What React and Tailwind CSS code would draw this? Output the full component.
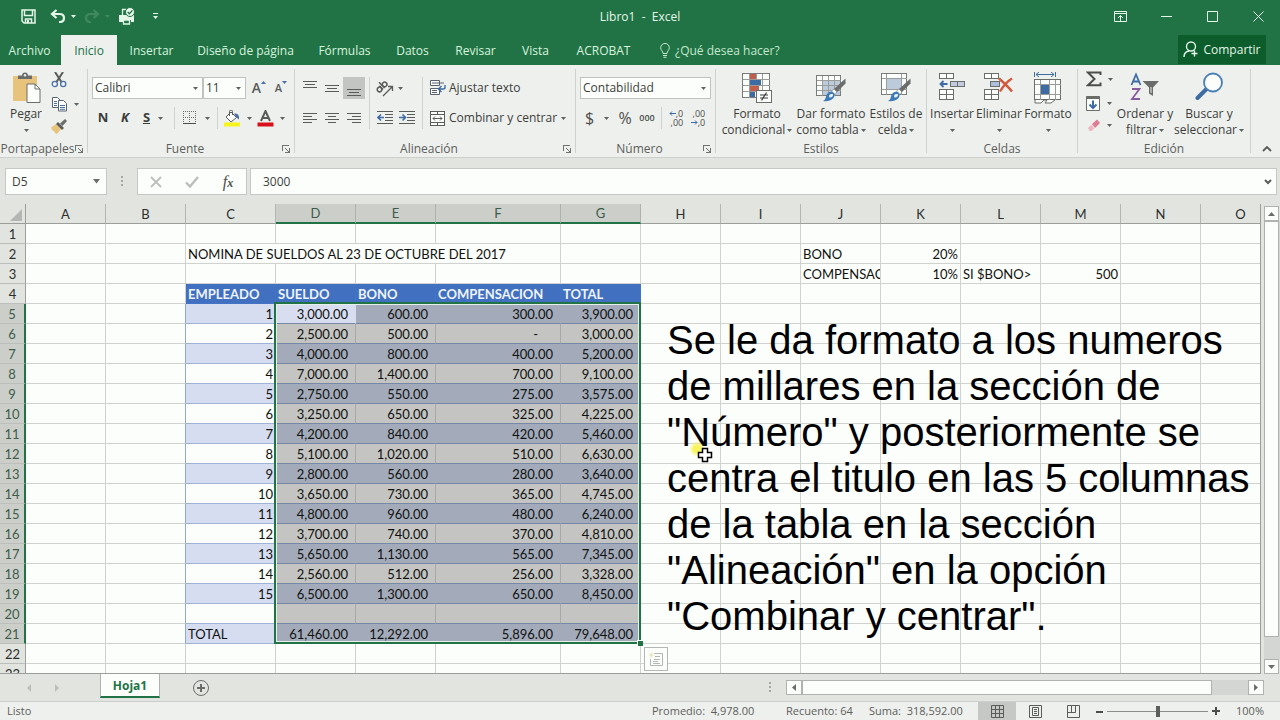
import React from 'react';
import clsx from 'clsx';

const columns = [
  { name: 'A', width: 80 },
  { name: 'B', width: 80 },
  { name: 'C', width: 90 },
  { name: 'D', width: 80 },
  { name: 'E', width: 80 },
  { name: 'F', width: 125 },
  { name: 'G', width: 80 },
  ...'HIJKLMNO'.split('').map((name) => ({ name, width: 80 })),
];

const ROW_HEADER_WIDTH = 26;
const ROW_COUNT = 23;
const sheetWidth = columns.reduce((sum, c) => sum + c.width, ROW_HEADER_WIDTH);

const payroll = [
  ['3,000.00', '600.00', '300.00', '3,900.00'],
  ['2,500.00', '500.00', '-', '3,000.00'],
  ['4,000.00', '800.00', '400.00', '5,200.00'],
  ['7,000.00', '1,400.00', '700.00', '9,100.00'],
  ['2,750.00', '550.00', '275.00', '3,575.00'],
  ['3,250.00', '650.00', '325.00', '4,225.00'],
  ['4,200.00', '840.00', '420.00', '5,460.00'],
  ['5,100.00', '1,020.00', '510.00', '6,630.00'],
  ['2,800.00', '560.00', '280.00', '3,640.00'],
  ['3,650.00', '730.00', '365.00', '4,745.00'],
  ['4,800.00', '960.00', '480.00', '6,240.00'],
  ['3,700.00', '740.00', '370.00', '4,810.00'],
  ['5,650.00', '1,130.00', '565.00', '7,345.00'],
  ['2,560.00', '512.00', '256.00', '3,328.00'],
  ['6,500.00', '1,300.00', '650.00', '8,450.00'],
];

const cells = {
  C2: 'NOMINA DE SUELDOS AL 23 DE OCTUBRE DEL 2017',
  J2: 'BONO',
  K2: '20%',
  J3: 'COMPENSACION',
  K3: '10%',
  L3: 'SI $BONO>',
  M3: '500',
  C4: 'EMPLEADO',
  D4: 'SUELDO',
  E4: 'BONO',
  F4: 'COMPENSACION',
  G4: 'TOTAL',
  C21: 'TOTAL',
  D21: '61,460.00',
  E21: '12,292.00',
  F21: '5,896.00',
  G21: '79,648.00',
};

payroll.forEach((values, i) => {
  cells[`C${i + 5}`] = String(i + 1);
  ['D', 'E', 'F', 'G'].forEach((col, j) => {
    cells[`${col}${i + 5}`] = values[j];
  });
});

const note = [
  'Se le da formato a los numeros',
  'de millares en la sección de',
  '"Número" y posteriormente se',
  'centra el titulo en las 5 columnas',
  'de la tabla en la sección',
  '"Alineación" en la opción',
  '"Combinar y centrar".',
];

const tabs = [
  { label: 'Archivo', width: 'w-[59px] pr-1' },
  { label: 'Inicio', width: 'w-[56px]', active: true },
  { label: 'Insertar', width: 'w-[69px]' },
  { label: 'Diseño de página', width: 'w-[119px]' },
  { label: 'Fórmulas', width: 'w-[79px]' },
  { label: 'Datos', width: 'w-[57px]' },
  { label: 'Revisar', width: 'w-[69px]' },
  { label: 'Vista', width: 'w-[51px]' },
  { label: 'ACROBAT', width: 'w-[85px]' },
];

/* ---------- small pieces ---------- */

const Caret = ({ className = 'text-[#5f615f]' }) => (
  <svg width="5" height="3" viewBox="0 0 5 3" className={clsx('shrink-0', className)}>
    <path d="M0 0h5L2.500 3z" fill="currentColor" />
  </svg>
);

const Tool = ({ label, className = 'w-[22px]', children }) => (
  <button type="button" aria-label={label} className={clsx('flex h-[22px] shrink-0 items-center justify-center', className)}>
    {children}
  </button>
);

const Divider = ({ className }) => <div className={clsx('w-px shrink-0 bg-[#d0d2cf]', className)} />;

const Group = ({ label, launcher, width, children }) => (
  <section className={clsx('flex shrink-0', width)}>
    <div className="flex min-w-0 flex-1 flex-col">
      <div className="flex flex-1">{children}</div>
      <div className="flex h-4 items-center">
        <span className="flex-1 text-center text-[#5c5e5c]">{label}</span>
        {launcher && (
          <button type="button" aria-label={`Configuración de ${label}`} className="flex w-3 items-center">
            <svg width="8" height="8" viewBox="0 0 8 8" fill="none" stroke="#70726f" shapeRendering="crispEdges">
              <path d="M.5 6V.5H7M3 3l4 4M7.500 3v4.500H3" />
            </svg>
          </button>
        )}
      </div>
    </div>
    <Divider className="my-1" />
  </section>
);

const Combo = ({ label, value, width }) => (
  <span className={clsx('relative flex h-[22px] items-center border border-[#c0c2bf] bg-[#fcfefb]', width)}>
    <select aria-label={label} defaultValue={value} className="h-full w-full appearance-none bg-transparent pl-0.5 outline-none">
      <option>{value}</option>
    </select>
    <Caret className="pointer-events-none absolute right-1 text-[#5f615f]" />
  </span>
);

const BigButton = ({ icon, lines, width }) => (
  <button type="button" className={clsx('flex shrink-0 flex-col items-center pt-[7px]', width)}>
    <span className="flex h-[34px] items-start justify-center">{icon}</span>
    <span className="leading-4 whitespace-nowrap">{lines[0]}</span>
    <span className="flex h-4 items-center gap-0.5 leading-4 whitespace-nowrap">
      {lines[1]}
      <Caret />
    </span>
  </button>
);

/* ---------- icons ---------- */

const SaveIcon = () => (
  <svg width="15" height="15" viewBox="0 0 15 15" fill="none" stroke="#e4f7e8" strokeWidth="1.500">
    <path d="M1 1h13v13H3l-2-2z" />
    <path d="M3.500 1v5.500h8V1M4.500 14v-4h6v4" />
    <path d="M6 11h2v3H6z" fill="#e4f7e8" stroke="none" />
  </svg>
);

const UndoIcon = ({ flip, className }) => (
  <svg width="16" height="14" viewBox="0 0 16 14" fill="none" stroke="currentColor" strokeWidth="2.200" className={clsx(flip && '-scale-x-100', className)}>
    <path d="M6.500 1L2 5l4.500 4" />
    <path d="M2 5h7.500c3 0 4.500 1.600 4.500 4s-1.600 4-4.500 4H9" />
  </svg>
);

const PrintIcon = () => (
  <svg width="18" height="18" viewBox="0 0 18 18">
    <path d="M1 8h15v7h-3v-2H5v2H1z" fill="#e4f7e8" />
    <path d="M4.500 8V2.500H8M5.500 13h6v4h-6z" fill="#217346" stroke="#e4f7e8" strokeWidth="1.300" />
    <circle cx="12" cy="5" r="4.500" fill="#e4f7e8" stroke="#217346" />
    <path d="M9.700 5l1.700 1.800 3-3.400" fill="none" stroke="#217346" strokeWidth="1.300" />
  </svg>
);

const PasteIcon = () => (
  <svg width="30" height="32" viewBox="0 0 30 32">
    <path d="M2 4h24v25H2z" fill="#e8c37c" />
    <path d="M7 7V3.500h4a3 3 0 016 0h4V7z" fill="#6b6d6b" />
    <circle cx="14" cy="3.200" r="1.200" fill="#eef0ed" />
    <path d="M16 12h8l5 5v13.500H16z" fill="#fcfefb" stroke="#6b6d6b" />
    <path d="M24 12v5h5" fill="none" stroke="#6b6d6b" />
  </svg>
);

const CutIcon = () => (
  <svg width="16" height="16" viewBox="0 0 16 16" fill="none">
    <path d="M4 0l6.500 10M12 0L5.500 10" stroke="#5a5c5a" strokeWidth="2" />
    <circle cx="3.800" cy="12" r="2.600" stroke="#4a70a8" strokeWidth="1.300" />
    <circle cx="12.200" cy="12" r="2.600" stroke="#4a70a8" strokeWidth="1.300" />
  </svg>
);

const CopyIcon = () => (
  <svg width="16" height="15" viewBox="0 0 16 15" fill="#fcfefb" stroke="#5a6270">
    <path d="M.5.500h5L8.500 3.500v7h-8z" />
    <path d="M2 4.500h3M2 6.500h3M2 8.500h3" stroke="#4a70a8" />
    <path d="M6.500 3.500h5l3 3v7.500h-8z" />
    <path d="M8 8.500h5M8 10.500h5M8 12.300h5" stroke="#4a70a8" />
  </svg>
);

const PainterIcon = () => (
  <svg width="16" height="15" viewBox="0 0 16 15">
    <path d="M0 8.500l5-3.500 5 5-4 5-2-1-1-2-1.500-.5z" fill="#e8c37c" />
    <path d="M5 5l2-2 6 6-2 2z" fill="#5a5c5a" />
    <path d="M9 4.500L14 0l2 2-4.500 5z" fill="#6b6d6b" />
  </svg>
);

const LetterA = ({ size, up }) => (
  <span className="flex h-[22px] items-center">
    <span className={clsx('font-semibold text-[#5a5c5a]', size)}>A</span>
    <svg width="5" height="3" viewBox="0 0 5 3" className="mb-3">
      <path d={up ? 'M0 3h5L2.500 0z' : 'M0 0h5L2.500 3z'} fill="#4a70a8" />
    </svg>
  </span>
);

const BordersIcon = () => (
  <svg width="14" height="14" viewBox="0 0 14 14" fill="none" stroke="#6b6d6b" shapeRendering="crispEdges">
    <path d="M.5 0v12M12.500 0v12M6.500 0v12M0 .5h13M0 6.500h13" strokeDasharray="1 1" />
    <path d="M0 12.500h13" stroke="#4c4e4c" />
  </svg>
);

const FillIcon = () => (
  <svg width="18" height="17" viewBox="0 0 18 17">
    <path d="M3 7l5-5 5.500 5.500L8 12z" fill="#fcfefb" stroke="#5a5c5a" />
    <path d="M6.500 6V1.500a1.500 1.500 0 013 0V5" fill="none" stroke="#5a5c5a" />
    <path d="M11 3.500c3.500-.5 5.500 1.500 5 6l-2.500-2z" fill="#4a70a8" />
    <path d="M1 12.500h16v4H1z" fill="#f7f31b" />
  </svg>
);

const TextColorIcon = () => (
  <svg width="17" height="17" viewBox="0 0 17 17">
    <path d="M4 11L8.500 1 13 11M5.500 8h6" fill="none" stroke="#5a5c5a" strokeWidth="2" />
    <path d="M.5 12.500h16v4H.5z" fill="#d8101c" />
  </svg>
);

const LinesIcon = ({ rows, size = 15 }) => (
  <svg width="14" height={size} viewBox={`0 0 14 ${size}`} stroke="#5a5c5a" shapeRendering="crispEdges">
    {rows.map(([x1, x2, y]) => (
      <path key={y} d={`M${x1} ${y}.5H${x2}`} />
    ))}
  </svg>
);

const OrientationIcon = () => (
  <svg width="18" height="17" viewBox="0 0 18 17" fill="none" stroke="#5a5c5a">
    <g transform="rotate(-45 6 7)" strokeWidth="1.500">
      <circle cx="2.500" cy="7" r="2.300" />
      <path d="M5 4.300v5.200M7.300 1.500v8" />
      <circle cx="9.700" cy="7" r="2.300" />
    </g>
    <path d="M7 16L16 7M12 6.500h4.500V11" strokeWidth="1.300" />
  </svg>
);

const IndentIcon = ({ increase }) => (
  <svg width="16" height="14" viewBox="0 0 16 14" fill="none" stroke="#5a5c5a" shapeRendering="crispEdges">
    <path d="M0 .5h16M8 3.500h8M8 6.500h8M8 9.500h8M0 12.500h16" />
    <path d={increase ? 'M0 6.500h6M3.500 3.500l3 3-3 3' : 'M1 6.500h6M4 3.500l-3 3 3 3'} stroke="#3d6ba3" strokeWidth="1.600" shapeRendering="auto" />
  </svg>
);

const WrapIcon = () => (
  <svg width="16" height="16" viewBox="0 0 16 16" fill="none" stroke="#5a6270">
    <path d="M.5.500h9v5h-9zM.5 8.500h9v6h-9z" fill="#fcfefb" />
    <path d="M2 3h12M2 10.500h5M2 12.500h5" />
    <path d="M15 5v2.500c0 1-1 1.500-2 1.500H9M11.500 6L8.500 9l3 3" stroke="#3d6ba3" strokeWidth="1.400" />
  </svg>
);

const MergeIcon = () => (
  <svg width="15" height="15" viewBox="0 0 15 15" fill="none" stroke="#5a5c5a" shapeRendering="crispEdges">
    <path d="M.5.500h14v14H.5z" fill="#fcfefb" />
    <path d="M.5 3.500h14M.5 11.500h14M7.500 0v3.500M7.500 11.500V15" />
    <path d="M3 7.500h9" />
    <path d="M5 5.500L3 7.500l2 2M10 5.500l2 2-2 2" shapeRendering="auto" />
  </svg>
);

const DecimalIcon = ({ top, bottom, left }) => (
  <span className="flex flex-col text-[9px] leading-[9px] text-[#4c4e4c]">
    <span className="flex items-center justify-end">
      {left && (
        <svg width="7" height="5" viewBox="0 0 7 5" fill="none" stroke="#3d6ba3">
          <path d="M7 2.500H1M3 .5l-2 2 2 2" />
        </svg>
      )}
      {top}
    </span>
    <span className="flex items-center justify-end">
      {!left && (
        <svg width="7" height="5" viewBox="0 0 7 5" fill="none" stroke="#3d6ba3">
          <path d="M0 2.500h6M4 .5l2 2-2 2" />
        </svg>
      )}
      {bottom}
    </span>
  </span>
);

const ConditionalIcon = () => (
  <svg width="30" height="31" viewBox="0 0 30 31" shapeRendering="crispEdges">
    <path d="M.5 1.500h27v24H.5z" fill="#fcfefb" stroke="#7a7c7a" />
    <path d="M8 2h6v5H8zM8 14h9v5H8z" fill="#c0604c" />
    <path d="M8 8h11v5H8zM8 20h5v5H8z" fill="#3d6ba3" />
    <path d="M.5 7.500h27M.5 13.500h27M.5 19.500h27M7.500 1.500v24M14.500 1.500v6M20.500 1.500v24" fill="none" stroke="#9a9c9a" />
    <path d="M14.500 18.500h15v12h-15z" fill="#fcfefb" stroke="#6b6d6b" />
    <path d="M18 23h8M18 26h8M24.500 20.500l-5 8" stroke="#3c3e3c" strokeWidth="1.200" shapeRendering="auto" />
  </svg>
);

const Brush = () => (
  <>
    <path d="M29.500 6.500v5L21 20l-3-3z" fill="#6b6d6b" />
    <path d="M18 17l3 3-2 2.500-3.500-3.500z" fill="#fcfefb" stroke="#6b6d6b" strokeWidth=".6" />
    <path d="M7 29c2-1 2.500-2 3-4.500.8-4 4-5.500 6.500-4.500 2.500 1.500 2.800 4.500.5 6.500C14.500 29 11 29.500 7 29z" fill="#3d7ab8" />
    <path d="M13 24c.5-2 3-2.500 4-1.500.5 1.500-1.500 3.500-3.500 3z" fill="#e8f1f8" />
  </>
);

const TableFormatIcon = () => (
  <svg width="30" height="31" viewBox="0 0 30 31">
    <g shapeRendering="crispEdges">
      <path d="M.5 3.500h24v20H.5z" fill="#fcfefb" stroke="#7a7c7a" />
      <path d="M7 9h17v14H7z" fill="#bccbdc" />
      <path d="M.5 8.500h24M.5 13.500h24M.5 18.500h24M6.500 3.500v20M12.500 3.500v20M18.500 3.500v20" fill="none" stroke="#9a9c9a" />
    </g>
    <Brush />
  </svg>
);

const CellStyleIcon = () => (
  <svg width="30" height="31" viewBox="0 0 30 31">
    <g shapeRendering="crispEdges">
      <path d="M.5 1.500h25v21H.5z" fill="#fcfefb" stroke="#7a7c7a" />
      <path d="M6 7h14v10H6z" fill="#bccbdc" />
      <path d="M.5 6.500h25M.5 17.500h25M5.500 1.500v21M20.500 1.500v21" fill="none" stroke="#9a9c9a" />
    </g>
    <Brush />
  </svg>
);

const InsertCellsIcon = () => (
  <svg width="27" height="28" viewBox="0 0 27 28" fill="#fcfefb" stroke="#6b6d6b" shapeRendering="crispEdges">
    <path d="M.5 1.500h14v5H.5zM7.500 1.500v5M.5 17.500h14v10H.5zM.5 22.500h14M7.500 17.500v10" />
    <path d="M11.500 9.500h14v5h-14zM18.500 9.500v5" fill="#c2cbe0" />
    <path d="M1.500 12h7M4.500 9l-3 3 3 3" fill="none" stroke="#3d6ba3" strokeWidth="1.800" shapeRendering="auto" />
  </svg>
);

const DeleteCellsIcon = () => (
  <svg width="30" height="28" viewBox="0 0 30 28" fill="#fcfefb" stroke="#6b6d6b" shapeRendering="crispEdges">
    <path d="M.5 1.500h14v5H.5zM7.500 1.500v5M.5 17.500h14v10H.5zM.5 22.500h14M7.500 17.500v10" />
    <path d="M6.500 9.500h9v5h-9z" fill="#aebfdd" />
    <path d="M15 6.500c4 3.500 9 8 13 13M28 6.500c-5 3-9 8-12 13" fill="none" stroke="#d0583c" strokeWidth="2.400" shapeRendering="auto" />
  </svg>
);

const FormatCellsIcon = () => (
  <svg width="30" height="32" viewBox="0 0 30 32" fill="#fcfefb" stroke="#6b6d6b" shapeRendering="crispEdges">
    <path d="M1.500 7.500h26v20h-26z" />
    <path d="M1.500 12.500h26M1.500 22.500h26M7.500 7.500v20M16.500 7.500v20M22.500 7.500v20" fill="none" stroke="#9a9c9a" />
    <path d="M8 13h8v9H8z" fill="#3d6ba3" stroke="none" />
    <path d="M2 28v3h6l3-3h3l-2 3h6l4-3" shapeRendering="auto" />
    <path d="M1.500 0v5M22.500 0v5M3 2.500h18M6 0L3 2.500 6 5M18 0l3 2.500L18 5" fill="none" stroke="#3d6ba3" shapeRendering="auto" />
  </svg>
);

const SigmaIcon = () => (
  <svg width="16" height="16" viewBox="0 0 16 16" fill="none" stroke="#4c4e4c" strokeWidth="2">
    <path d="M14.500 4V1.500H2L8.500 8 2 14.200h12.500V11.500" />
  </svg>
);

const FillDownIcon = () => (
  <svg width="15" height="15" viewBox="0 0 15 15">
    <path d="M.5.500h13v14H.5z" fill="#fcfefb" stroke="#6b6d6b" />
    <path d="M.5.500h13v2.500H.5z" fill="#6b6d6b" />
    <path d="M7 4.500V12M3.500 8.500L7 12l3.500-3.500" fill="none" stroke="#3d6ba3" strokeWidth="2" />
  </svg>
);

const EraserIcon = () => (
  <svg width="14" height="13" viewBox="0 0 14 13">
    <path d="M5 5l5-4.500L13 4 8 9z" fill="#e07c92" />
    <path d="M4.300 5.700L7.300 9.500 4.500 12H2.500L1 9z" fill="#efb5c0" />
  </svg>
);

const SortIcon = () => (
  <svg width="31" height="30" viewBox="0 0 31 30" fill="none">
    <path d="M1.500 13L6 2.500 10.500 13M3.500 9.500h5" stroke="#3d6ba3" strokeWidth="1.800" />
    <path d="M2 17h7.500L2 27h8" stroke="#8a5a9e" strokeWidth="1.800" />
    <path d="M12.500 9h16.500l-6 6.500v8.500l-4-2.500v-6z" fill="#6b6d6b" />
    <path d="M20.500 15v5.500l1 .8V15z" fill="#eef0ed" />
  </svg>
);

const FindIcon = () => (
  <svg width="29" height="30" viewBox="0 0 29 30" fill="none">
    <path d="M11.500 17L2.500 26" stroke="#3d6ba3" strokeWidth="4" strokeLinecap="round" />
    <circle cx="18" cy="10.500" r="9" fill="#fcfefb" stroke="#4a7fb5" strokeWidth="1.800" />
  </svg>
);

/* ---------- page parts ---------- */

const TitleBar = () => (
  <header className="grid h-8 grid-cols-3 items-center text-[#e4f7e8]">
    <div className="flex items-center pl-[21px]">
      <button type="button" aria-label="Guardar"><SaveIcon /></button>
      <button type="button" aria-label="Deshacer" className="ml-3.5 flex items-center gap-[5px]">
        <UndoIcon />
        <Caret className="text-[#e4f7e8]" />
      </button>
      <button type="button" aria-label="Rehacer" className="ml-2 flex items-center gap-[5px] text-[#41895f]">
        <UndoIcon flip />
        <Caret className="text-[#41895f]" />
      </button>
      <button type="button" aria-label="Vista previa e imprimir" className="ml-2"><PrintIcon /></button>
      <button type="button" aria-label="Personalizar barra" className="ml-4">
        <svg width="7" height="7" viewBox="0 0 7 7" fill="currentColor">
          <path d="M1 0h5v1H1zM1 3h5L3.500 6z" />
        </svg>
      </button>
    </div>
    <h1 className="pt-0.5 text-center whitespace-pre">{'Libro1  -  Excel'}</h1>
    <div className="flex justify-end">
      {[
        ['Opciones de la cinta', 'M.5 1.500h12v10H.5zM.5 3.500h12M6.500 11V5.500M4 8l2.500-2.500L9 8'],
        ['Minimizar', 'M1 6.500h11'],
        ['Maximizar', 'M1.500 1.500h10v10h-10z'],
        ['Cerrar', 'M1.500 1.500l10 10M11.500 1.500l-10 10'],
      ].map(([label, d]) => (
        <button key={label} type="button" aria-label={label} className="flex h-8 w-[46px] items-center justify-center pl-1">
          <svg width="13" height="13" viewBox="0 0 13 13" fill="none" stroke="currentColor">
            <path d={d} />
          </svg>
        </button>
      ))}
    </div>
  </header>
);

const TabBar = () => (
  <nav className="flex h-[33px] items-end pr-3.5 pl-0.5 text-[#d8f3de]">
    {tabs.map((tab) => (
      <button
        key={tab.label}
        type="button"
        className={clsx('h-[30px] shrink-0 pt-0.5 whitespace-nowrap', tab.width, tab.active && 'bg-[#eef0ed] text-[#217346]')}
      >
        {tab.label}
      </button>
    ))}
    <button type="button" className="flex h-[30px] items-center gap-[5px] pt-px pl-3.5 whitespace-nowrap text-[#c3e8cd]">
      <svg width="10" height="15" viewBox="0 0 10 15" fill="none" stroke="currentColor">
        <path d="M3 10.500C3 8 .7 7.500.7 4.700a4.300 4.300 0 018.600 0C9.300 7.500 7 8 7 10.500zM3 12.500h4M3.500 14.300h3" />
      </svg>
      ¿Qué desea hacer?
    </button>
    <button type="button" className="mb-px ml-auto flex h-[29px] w-[88px] items-center justify-center gap-1 bg-[#0c5c2c] text-[#e4f7e8]">
      <svg width="16" height="17" viewBox="0 0 16 17" fill="none" stroke="currentColor" strokeWidth="1.400">
        <circle cx="8" cy="5.500" r="4.500" />
        <path d="M1 16c0-3.500 2-5.500 5-6M11.500 9.500v6M8.500 12.500h6" />
      </svg>
      Compartir
    </button>
  </nav>
);

const ClipboardGroup = () => (
  <Group label="Portapapeles" launcher width="w-[88px]">
    <BigButton icon={<PasteIcon />} lines={['Pegar', '']} width="w-[48px] pl-1" />
    <div className="flex flex-col pt-1">
      <Tool label="Cortar"><CutIcon /></Tool>
      <Tool label="Copiar" className="mt-0.5 w-[34px] gap-1.5"><CopyIcon /><Caret /></Tool>
      <Tool label="Copiar formato"><PainterIcon /></Tool>
    </div>
  </Group>
);

const FontGroup = () => (
  <Group label="Fuente" launcher width="w-[207px]">
    <div className="flex flex-1 flex-col gap-2 pt-3 pl-1">
      <div className="flex">
        <Combo label="Fuente" value="Calibri" width="w-[111px]" />
        <Combo label="Tamaño de fuente" value="11" width="w-[43px]" />
        <Tool label="Aumentar tamaño" className="ml-0.5 w-[22px]"><LetterA size="text-sm" up /></Tool>
        <Tool label="Disminuir tamaño"><LetterA size="text-[11px]" /></Tool>
      </div>
      <div className="flex items-center text-[13px] font-bold text-[#3c3e3c]">
        <Tool label="Negrita">N</Tool>
        <Tool label="Cursiva"><i>K</i></Tool>
        <Tool label="Subrayado" className="w-[34px] gap-2"><u>S</u><Caret /></Tool>
        <Divider className="ml-1 h-[22px]" />
        <Tool label="Bordes" className="w-[42px] gap-2"><BordersIcon /><Caret /></Tool>
        <Divider className="h-[22px]" />
        <Tool label="Color de relleno" className="w-[38px] gap-1.5"><FillIcon /><Caret /></Tool>
        <Tool label="Color de fuente" className="w-[30px] gap-1.5"><TextColorIcon /><Caret /></Tool>
      </div>
    </div>
  </Group>
);

const AlignGroup = () => (
  <Group label="Alineación" launcher width="w-[281px]">
    <div className="flex pt-3 pl-1">
      <div className="grid h-[52px] grid-cols-3 gap-y-2">
        <Tool label="Alinear arriba"><LinesIcon rows={[[0, 14, 0], [2, 12, 3], [0, 14, 6]]} /></Tool>
        <Tool label="Alinear en el medio"><LinesIcon rows={[[0, 14, 4], [2, 12, 7], [0, 14, 10]]} /></Tool>
        <Tool label="Alinear abajo" className="w-[22px] bg-[#c3c5c2]"><LinesIcon rows={[[0, 14, 8], [2, 12, 11], [0, 14, 14]]} /></Tool>
        <Tool label="Alinear a la izquierda"><LinesIcon rows={[[0, 14, 1], [0, 9, 4], [0, 14, 7], [0, 9, 10]]} size={12} /></Tool>
        <Tool label="Centrar"><LinesIcon rows={[[0, 14, 1], [3, 11, 4], [0, 14, 7], [3, 11, 10]]} size={12} /></Tool>
        <Tool label="Alinear a la derecha"><LinesIcon rows={[[0, 14, 1], [5, 14, 4], [0, 14, 7], [5, 14, 10]]} size={12} /></Tool>
      </div>
      <Divider className="mx-1 h-[52px]" />
      <div className="flex w-11 flex-col gap-2">
        <Tool label="Orientación" className="w-[30px] gap-1"><OrientationIcon /><Caret /></Tool>
        <div className="flex">
          <Tool label="Disminuir sangría"><IndentIcon /></Tool>
          <Tool label="Aumentar sangría"><IndentIcon increase /></Tool>
        </div>
      </div>
      <Divider className="mx-1 h-[52px]" />
      <div className="flex flex-col items-start gap-2 pl-[3px]">
        <button type="button" className="flex h-[22px] items-center gap-[3px] whitespace-nowrap">
          <WrapIcon />
          Ajustar texto
        </button>
        <button type="button" className="flex h-[22px] items-center gap-1 whitespace-nowrap">
          <MergeIcon />
          <span className="w-[108px] text-left">Combinar y centrar</span>
          <Caret />
        </button>
      </div>
    </div>
  </Group>
);

const NumberGroup = () => (
  <Group label="Número" launcher width="w-[140px]">
    <div className="flex flex-1 flex-col gap-2 pt-3 pl-1">
      <Combo label="Formato de número" value="Contabilidad" width="w-[131px]" />
      <div className="flex items-center text-[#4c4e4c]">
        <Tool label="Formato de moneda" className="w-[34px] gap-2.5 text-base">$<Caret /></Tool>
        <Tool label="Porcentaje" className="w-[22px] text-base">%</Tool>
        <Tool label="Estilo millares" className="w-[22px] text-[9px] font-semibold">000</Tool>
        <Divider className="mx-[3px] h-[22px]" />
        <Tool label="Aumentar decimales"><DecimalIcon left top=",0" bottom=",00" /></Tool>
        <Tool label="Disminuir decimales"><DecimalIcon top=",00" bottom=",0" /></Tool>
      </div>
    </div>
  </Group>
);

const EditGroup = () => (
  <Group label="Edición" width="w-[173px]">
    <div className="flex flex-col items-start pt-[3px] pl-1">
      <Tool label="Autosuma" className="w-[34px] gap-1.5"><SigmaIcon /><Caret /></Tool>
      <Tool label="Rellenar" className="mt-0.5 w-[34px] gap-1.5"><FillDownIcon /><Caret /></Tool>
      <Tool label="Borrar" className="w-[34px] gap-1.5"><EraserIcon /><Caret /></Tool>
    </div>
    <BigButton icon={<SortIcon />} lines={['Ordenar y', 'filtrar']} width="w-[58px]" />
    <BigButton icon={<FindIcon />} lines={['Buscar y', 'seleccionar']} width="w-[70px]" />
  </Group>
);

const Ribbon = () => (
  <div className="flex h-[93px] border-b border-[#cdcfcc] bg-[#eef0ed] text-[#3c3e3c]">
    <ClipboardGroup />
    <FontGroup />
    <AlignGroup />
    <NumberGroup />
    <Group label="Estilos" width="w-[211px]">
      <BigButton icon={<ConditionalIcon />} lines={['Formato', 'condicional']} width="ml-1 w-[74px]" />
      <BigButton icon={<TableFormatIcon />} lines={['Dar formato', 'como tabla']} width="w-[74px]" />
      <BigButton icon={<CellStyleIcon />} lines={['Estilos de', 'celda']} width="w-[56px]" />
    </Group>
    <Group label="Celdas" width="w-[151px]">
      <BigButton icon={<InsertCellsIcon />} lines={['Insertar', '']} width="ml-0.5 w-[46px]" />
      <BigButton icon={<DeleteCellsIcon />} lines={['Eliminar', '']} width="w-[48px]" />
      <BigButton icon={<FormatCellsIcon />} lines={['Formato', '']} width="w-[50px]" />
    </Group>
    <EditGroup />
    <button type="button" aria-label="Contraer la cinta" className="mt-auto mr-2 ml-auto flex h-4 items-center">
      <svg width="10" height="6" viewBox="0 0 10 6" fill="none" stroke="#5a5c5a" strokeWidth="1.800">
        <path d="M1 5l4-4 4 4" />
      </svg>
    </button>
  </div>
);

const FormulaBar = () => (
  <div className="flex h-[46px] items-start bg-[#e2e4e0] pt-2.5 pr-[3px] pl-[5px] text-[#3c3e3c]">
    <div className="flex h-[27px] w-[102px] items-center border border-[#c6c8c5] bg-[#fcfefb] pr-1.5 pl-1.5">
      <input aria-label="Cuadro de nombres" defaultValue="D5" className="min-w-0 flex-1 bg-transparent outline-none" />
      <svg width="7" height="5" viewBox="0 0 7 5">
        <path d="M0 0h7L3.500 4.500z" fill="#6b6d6b" />
      </svg>
    </div>
    <svg width="30" height="27" viewBox="0 0 30 27" fill="#a6a8a5">
      <path d="M14 8h2v2h-2zM14 12h2v2h-2zM14 16h2v2h-2z" />
    </svg>
    <div className="flex h-[27px] w-[110px] items-center border border-[#c6c8c5] bg-[#fcfefb]">
      <button type="button" aria-label="Cancelar" className="flex flex-1 justify-center">
        <svg width="12" height="12" viewBox="0 0 12 12" fill="none" stroke="#bcbebb" strokeWidth="1.800">
          <path d="M1 1l10 10M11 1L1 11" />
        </svg>
      </button>
      <button type="button" aria-label="Introducir" className="flex flex-1 justify-center">
        <svg width="14" height="12" viewBox="0 0 14 12" fill="none" stroke="#bcbebb" strokeWidth="2.400">
          <path d="M1 6.500l4 4L13 1" />
        </svg>
      </button>
      <button type="button" aria-label="Insertar función" className="flex-1 font-['Liberation_Serif',serif] text-base leading-5 text-[#4c4e4c] italic">
        f<span className="text-xs font-bold">x</span>
      </button>
    </div>
    <div className="ml-[3px] flex h-[27px] flex-1 items-center border border-[#c6c8c5] bg-[#fcfefb] pr-1 pl-3">
      <input aria-label="Barra de fórmulas" defaultValue="3000" className="min-w-0 flex-1 bg-transparent outline-none" />
      <svg width="8" height="6" viewBox="0 0 8 6" fill="none" stroke="#5a5c5a" strokeWidth="2">
        <path d="M1 1l3 3 3-3" />
      </svg>
    </div>
  </div>
);

const isSelectedCol = (col) => 'DEFG'.includes(col);
const isSelectedRow = (row) => row >= 5 && row <= 21;

const cellStyle = (col, row) => {
  const value = cells[`${col}${row}`];
  const inTable = 'CDEFG'.includes(col);
  const numeric = value && /^[\d,.%-]+$/.test(value);
  const banded = row % 2 === 1;
  const accounting = isSelectedCol(col) && isSelectedRow(row);

  if (inTable && row === 4) {
    return 'border-[#4472c4] bg-[#4270c0] pl-0.5 text-left font-bold text-[#eef4fc]';
  }
  if (accounting) {
    return clsx(
      'border-b-[#7688a6] text-right',
      value === '-' ? 'pr-[22px]' : 'pr-[7px]',
      col === 'D' && row === 5 && 'border-r-[#d8def0] bg-[#d8def0]',
      !(col === 'D' && row === 5) && banded && 'border-r-[#a3abba] bg-[#a3abba]',
      !banded && 'border-r-[#a8aaa8] bg-[#c4c5c2]',
    );
  }
  if (col === 'C' && isSelectedRow(row)) {
    return clsx('border-r-[#8fa9d8] border-b-[#9fb2d8]', banded && 'bg-[#d7ddf0]', numeric ? 'pr-0.5 text-right' : 'pl-0.5 text-left');
  }
  return clsx(
    col === 'B' && isSelectedRow(row) ? 'border-r-[#8fa9d8] border-b-[#d0d2cf]' : 'border-[#d0d2cf]',
    numeric ? 'pr-0.5 text-right' : 'pl-0.5 text-left',
  );
};

// The last column has no width of its own, so it takes up the rest of a wide window.
const Sheet = () => (
  <table
    className="w-full table-fixed border-separate border-spacing-0 font-[Lato,sans-serif] text-[13px] text-[#101210]"
    style={{ minWidth: sheetWidth }}
  >
    <colgroup>
      <col style={{ width: ROW_HEADER_WIDTH }} />
      {columns.map((c, i) => (
        <col key={c.name} style={i < columns.length - 1 ? { width: c.width } : undefined} />
      ))}
    </colgroup>
    <thead>
      <tr className="h-5 bg-[#e2e4e0]">
        <th aria-label="Seleccionar todo" className="h-5 border-r border-b border-[#9c9e9b] p-0">
          <svg width="24" height="18" viewBox="0 0 24 18" fill="#b4b6b3">
            <path d="M22 4v12H10z" />
          </svg>
        </th>
        {columns.map((c) => (
          <th
            key={c.name}
            scope="col"
            className={clsx(
              'h-5 border-r px-0 pt-px pb-0 leading-[17px] font-normal',
              isSelectedCol(c.name)
                ? 'border-b-2 border-r-[#b0b2af] border-b-[#217346] bg-[#cbcec9] text-[#3d5c4a]'
                : 'border-b border-r-[#b4b6b3] border-b-[#9c9e9b] text-[#2c2e2c]',
            )}
          >
            {c.name}
          </th>
        ))}
      </tr>
    </thead>
    <tbody>
      {Array.from({ length: ROW_COUNT }, (_, i) => i + 1).map((row) => (
        <tr key={row} className="h-5">
          <th
            scope="row"
            className={clsx(
              'h-5 border-b border-b-[#bcbebb] px-0 pt-0.5 pb-0 leading-[17px] font-normal',
              isSelectedRow(row)
                ? 'border-r-2 border-r-[#217346] bg-[#cbcec9] text-[#3d5c4a]'
                : 'border-r border-r-[#9c9e9b] bg-[#e2e4e0] text-[#2c2e2c]',
            )}
          >
            {row}
          </th>
          {columns
            .filter((c) => !(row === 2 && 'DEF'.includes(c.name)))
            .map((c) => (
              <td
                key={c.name}
                colSpan={row === 2 && c.name === 'C' ? 4 : 1}
                className={clsx('h-5 overflow-hidden border-r border-b pt-0.5 pb-0 leading-[17px] whitespace-nowrap', cellStyle(c.name, row))}
              >
                {cells[`${c.name}${row}`]}
              </td>
            ))}
        </tr>
      ))}
    </tbody>
  </table>
);

const SelectionFrame = () => (
  <div className="pointer-events-none absolute top-[98px] left-[274px] h-[342px] w-[367px] border-2 border-[#217346]">
    <div className="h-full border border-[#e6efe9]" />
    <div className="absolute -right-1 -bottom-1 h-1.5 w-1.5 border-t border-l border-white bg-[#217346]" />
  </div>
);

const Workspace = () => (
  <main className="flex min-h-0 flex-1 bg-[#e2e4e0]">
    <div className="relative min-w-0 flex-1 overflow-hidden border-r border-b border-[#9c9e9b] bg-[#fcfefb]">
      <Sheet />
      <SelectionFrame />
      <button type="button" aria-label="Análisis rápido" className="absolute top-[443px] left-[644px] flex h-6 w-6 items-center justify-center border border-[#b4b6b3] bg-[#fcfefb]">
        <svg width="16" height="16" viewBox="0 0 16 16" fill="none" stroke="#b4b6b3">
          <path d="M6 2.500h8.500v12H2.500V8M7 5.500h5M6 8.500h6M5 10.500h5M5 12.500h7" />
          <path d="M4.500 0L1 5h2l-1.500 4L6 3.500H4z" fill="#ece6c0" stroke="none" />
        </svg>
      </button>
      <div className="pointer-events-none absolute top-[113px] left-[667px] font-['Liberation_Sans',sans-serif] text-[40px] leading-[46px] whitespace-nowrap text-black">
        {note.map((line) => (
          <p key={line}>{line}</p>
        ))}
      </div>
      <svg width="30" height="30" viewBox="0 0 30 30" className="pointer-events-none absolute top-[236px] left-[688px]">
        <defs>
          <radialGradient id="click">
            <stop offset="0.400" stopColor="#f7f24a" stopOpacity="0.900" />
            <stop offset="1" stopColor="#f7f24a" stopOpacity="0" />
          </radialGradient>
        </defs>
        <circle cx="9" cy="9" r="8" fill="url(#click)" />
        <path d="M14.500 8.500h5v4h4v5h-4v4h-5v-4h-4v-5h4z" fill="#fff" stroke="#000" strokeWidth="1.500" />
      </svg>
    </div>
    <div className="flex w-[19px] flex-col pt-0.5 pl-[3px]">
      <button type="button" aria-label="Subir" className="flex h-[15px] w-[15px] items-center justify-center border border-[#b0b2af] bg-[#fcfefb]">
        <svg width="7" height="4" viewBox="0 0 7 4"><path d="M0 4h7L3.500 0z" fill="#6b6d6b" /></svg>
      </button>
      <div className="flex-1 bg-[#d4d6d3]">
        <div className="h-[95%] w-[15px] border border-[#b0b2af] bg-[#fcfefb]" />
      </div>
      <button type="button" aria-label="Bajar" className="flex h-[15px] w-[15px] items-center justify-center border border-[#b0b2af] bg-[#fcfefb]">
        <svg width="7" height="4" viewBox="0 0 7 4"><path d="M0 0h7L3.500 4z" fill="#6b6d6b" /></svg>
      </button>
    </div>
  </main>
);

const SheetTabs = () => (
  <div className="flex h-[27px] items-start bg-[#e2e4e0] pr-4">
    <div className="flex h-[27px] w-[100px] items-center gap-6 pl-[27px]">
      <button type="button" aria-label="Hoja anterior">
        <svg width="4" height="8" viewBox="0 0 4 8"><path d="M4 0v8L0 4z" fill="#bcbebb" /></svg>
      </button>
      <button type="button" aria-label="Hoja siguiente">
        <svg width="4" height="8" viewBox="0 0 4 8"><path d="M0 0v8l4-4z" fill="#bcbebb" /></svg>
      </button>
    </div>
    <button type="button" className="h-6 w-[60px] border-x border-b-2 border-x-[#b0b2af] border-b-[#217346] bg-[#fcfefb] pt-0.5 font-bold text-[#217346]">
      Hoja1
    </button>
    <button type="button" aria-label="Hoja nueva" className="ml-8 flex h-[27px] items-center">
      <svg width="18" height="18" viewBox="0 0 18 18" fill="none" stroke="#6b6d6b">
        <circle cx="9" cy="9" r="7.500" />
        <path d="M9 5v8M5 9h8" strokeWidth="2" />
      </svg>
    </button>
    <svg width="4" height="27" viewBox="0 0 4 27" fill="#a6a8a5" className="ml-auto">
      <path d="M1 8h2v2H1zM1 12h2v2H1zM1 16h2v2H1z" />
    </svg>
    <div className="mt-1.5 ml-3.5 flex w-[478px] bg-[#d4d6d3]">
      <button type="button" aria-label="Izquierda" className="flex h-[15px] w-4 items-center justify-center border border-[#b0b2af] bg-[#fcfefb]">
        <svg width="4" height="7" viewBox="0 0 4 7"><path d="M4 0v7L0 3.500z" fill="#6b6d6b" /></svg>
      </button>
      <div className="flex-1">
        <div className="h-[15px] w-[92%] border border-[#b0b2af] bg-[#fcfefb]" />
      </div>
      <button type="button" aria-label="Derecha" className="flex h-[15px] w-4 items-center justify-center border border-[#b0b2af] bg-[#fcfefb]">
        <svg width="4" height="7" viewBox="0 0 4 7"><path d="M0 0v7l4-3.500z" fill="#6b6d6b" /></svg>
      </button>
    </div>
  </div>
);

const StatusBar = () => (
  <footer className="flex h-[19px] items-center border-t border-[#cdcfcc] bg-[#eef0ed] pr-4 pl-[7px] text-[11px] whitespace-nowrap text-[#5c5e5c]">
    <span>Listo</span>
    <span className="ml-auto w-[134px]">Promedio:&nbsp; 4,978.00</span>
    <span className="w-[83px]">Recuento: 64</span>
    <span className="w-[109px]">Suma:&nbsp; 318,592.00</span>
    <button type="button" aria-label="Normal" className="flex h-[18px] w-[38px] items-center justify-center bg-[#c6c8c5]">
      <svg width="13" height="13" viewBox="0 0 13 13" fill="none" stroke="#5a5c5a">
        <path d="M.5.500h12v12H.5zM4.500 0v13M8.500 0v13M0 4.500h13M0 8.500h13" />
      </svg>
    </button>
    <button type="button" aria-label="Diseño de página" className="flex h-[18px] w-[38px] items-center justify-center">
      <svg width="13" height="13" viewBox="0 0 13 13" fill="none" stroke="#5a5c5a">
        <path d="M.5.500h12v12H.5zM3.500 2.500h6v8h-6zM5 4.500h3M5 6.500h3M5 8.500h3" />
      </svg>
    </button>
    <button type="button" aria-label="Salto de página" className="flex h-[18px] w-[38px] items-center justify-center">
      <svg width="13" height="13" viewBox="0 0 13 13" fill="none" stroke="#5a5c5a">
        <path d="M.5.500h12v12H.5zM4.500 0v7.500M8.500 0v7.500M.5 7.500h8" />
      </svg>
    </button>
    <button type="button" aria-label="Alejar" className="ml-1">
      <svg width="7" height="7" viewBox="0 0 7 7"><path d="M0 3h7v2H0z" fill="#4c4e4c" /></svg>
    </button>
    <input
      type="range"
      aria-label="Zoom"
      defaultValue="50"
      className="mx-1 h-3 w-[101px] appearance-none bg-transparent [&::-webkit-slider-runnable-track]:h-px [&::-webkit-slider-runnable-track]:bg-[#8c8e8b] [&::-webkit-slider-thumb]:-mt-[5px] [&::-webkit-slider-thumb]:h-[11px] [&::-webkit-slider-thumb]:w-1 [&::-webkit-slider-thumb]:appearance-none [&::-webkit-slider-thumb]:bg-[#5c5e5c]"
    />
    <button type="button" aria-label="Acercar">
      <svg width="8" height="8" viewBox="0 0 8 8"><path d="M0 3h3V0h2v3h3v2H5v3H3V5H0z" fill="#4c4e4c" /></svg>
    </button>
    <span className="w-11 text-right">100%</span>
  </footer>
);

const App = () => (
  <div className="flex h-screen flex-col overflow-hidden bg-[#217346] font-['Open_Sans',sans-serif] text-xs">
    <TitleBar />
    <TabBar />
    <Ribbon />
    <FormulaBar />
    <Workspace />
    <SheetTabs />
    <StatusBar />
  </div>
);

export default App;
